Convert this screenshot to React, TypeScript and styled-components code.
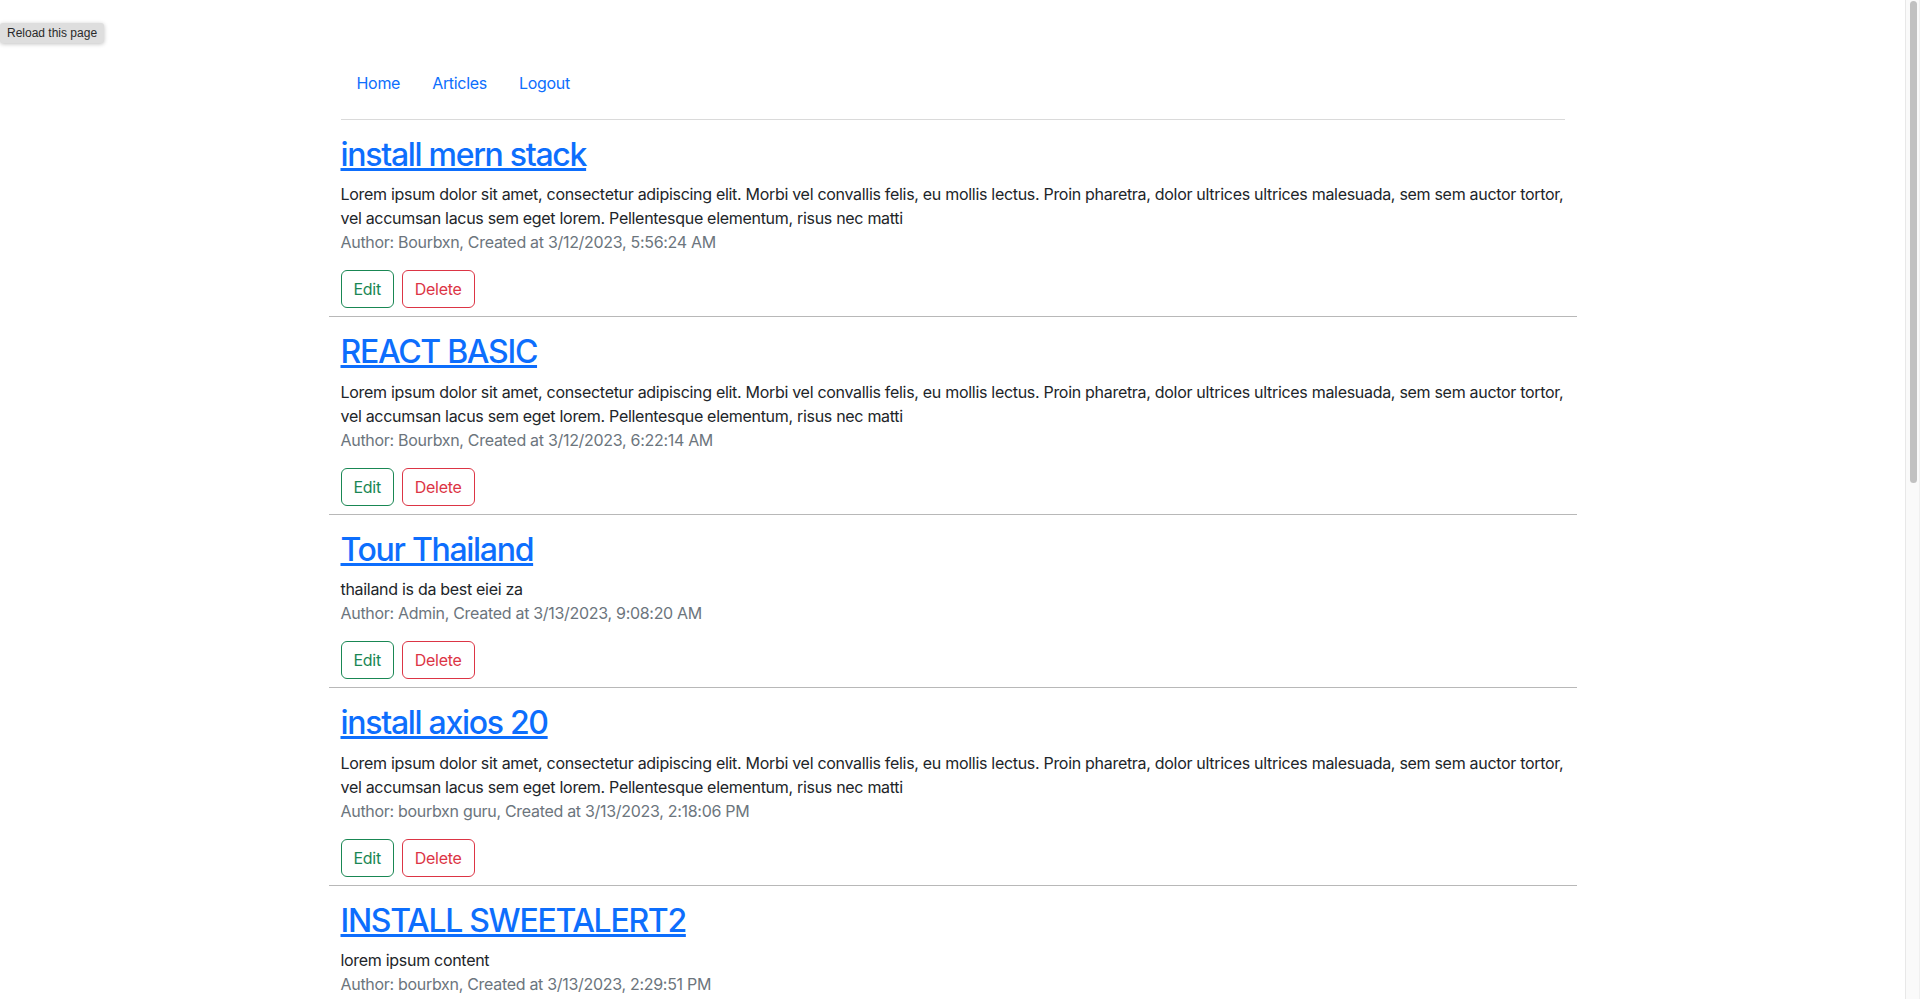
import React from "react"
import styled, { createGlobalStyle, css } from "styled-components"

type Article = {
  title: string
  content: string
  author: string
  createdAt: string
}

const lorem =
  "Lorem ipsum dolor sit amet, consectetur adipiscing elit. Morbi vel convallis felis, eu mollis lectus. Proin pharetra, dolor ultrices ultrices malesuada, sem sem auctor tortor, vel accumsan lacus sem eget lorem. Pellentesque elementum, risus nec matti"

const articles: Article[] = [
  { title: "install mern stack", content: lorem, author: "Bourbxn", createdAt: "3/12/2023, 5:56:24 AM" },
  { title: "REACT BASIC", content: lorem, author: "Bourbxn", createdAt: "3/12/2023, 6:22:14 AM" },
  { title: "Tour Thailand", content: "thailand is da best eiei za", author: "Admin", createdAt: "3/13/2023, 9:08:20 AM" },
  { title: "install axios 20", content: lorem, author: "bourbxn guru", createdAt: "3/13/2023, 2:18:06 PM" },
  { title: "INSTALL SWEETALERT2", content: "lorem ipsum content", author: "bourbxn", createdAt: "3/13/2023, 2:29:51 PM" },
  { title: "react router dom", content: lorem, author: "bourbxn", createdAt: "3/13/2023, 3:02:44 PM" },
  { title: "jwt authen", content: "json web token for login", author: "Admin", createdAt: "3/13/2023, 4:11:09 PM" },
  { title: "express api", content: lorem, author: "Bourbxn", createdAt: "3/14/2023, 8:45:31 AM" },
  { title: "mongodb atlas", content: "connect database with mongoose", author: "bourbxn guru", createdAt: "3/14/2023, 10:20:57 AM" },
  { title: "react quill", content: lorem, author: "bourbxn", createdAt: "3/14/2023, 1:37:12 PM" },
]

export default function App() {
  return (
    <>
      <GlobalStyle />
      <Shell>
        <Tooltip>Reload this page</Tooltip>
        <Main>
          <Page>
            <Header>
              <Nav>
                <NavLink href="#">Home</NavLink>
                <NavLink href="#">Articles</NavLink>
                <NavLink href="#">Logout</NavLink>
              </Nav>
              <Rule />
            </Header>
            {articles.map((a, i) => (
              <ArticleRow key={i}>
                <Title>
                  <a href="#">{a.title}</a>
                </Title>
                <Body>{a.content}</Body>
                <Meta>
                  Author: {a.author}, Created at {a.createdAt}
                </Meta>
                <Actions>
                  <OutlineButton $variant="success">Edit</OutlineButton>
                  <OutlineButton $variant="danger">Delete</OutlineButton>
                </Actions>
              </ArticleRow>
            ))}
          </Page>
        </Main>
        <ScrollTrack>
          <ScrollThumb style={{ height: 482 }} />
        </ScrollTrack>
      </Shell>
    </>
  )
}

const GlobalStyle = createGlobalStyle`
  html, body {
    height: 100%;
    overflow: hidden;
  }
  body {
    margin: 0;
    background: #fff;
    color: #212529;
    font-family: Inter, "Liberation Sans", sans-serif;
    font-size: 16px;
    line-height: 1.5;
    letter-spacing: -0.3px;
  }
`

const Shell = styled.div`
  position: relative;
  display: flex;
  height: 100vh;
`

const Main = styled.main`
  flex: 1;
  overflow-y: auto;
  scrollbar-width: none;
  &::-webkit-scrollbar {
    display: none;
  }
`

const ScrollTrack = styled.div`
  width: 15px;
  box-sizing: border-box;
  padding: 1px 3px 0 3px;
  background: #fafafa;
  border-left: 1px solid #e8e8e8;
  border-right: 1px solid #f0f0f0;
`

const ScrollThumb = styled.div`
  width: 7px;
  margin-left: 1px;
  background: #c1c1c1;
  border-radius: 4px;
`

const Tooltip = styled.div`
  position: absolute;
  top: 23px;
  left: 0;
  z-index: 10;
  height: 20px;
  padding: 0 7px;
  background: #dedede;
  border-radius: 3px;
  box-shadow: 0 1px 4px rgba(0, 0, 0, 0.25);
  color: #2a2a2a;
  font-family: "Liberation Sans", sans-serif;
  font-size: 12px;
  line-height: 20px;
  letter-spacing: 0;
`

const Page = styled.div`
  width: 1248px;
  margin: 0 auto;
  padding: 63px 0 40px;
`

const Header = styled.div`
  padding: 0 12px;
`

const Nav = styled.nav`
  display: flex;
`

const NavLink = styled.a`
  padding: 8px 16px;
  color: #0d6efd;
  text-decoration: none;
`

const Rule = styled.hr`
  margin: 16px 0 0;
  border: 0;
  border-top: 1px solid #dadada;
`

const ArticleRow = styled.div`
  padding: 16px 12px 8px;
  border-bottom: 1px solid #b8b8b8;
`

const Title = styled.h2`
  margin: 0 0 8px;
  font-size: 32px;
  font-weight: 500;
  line-height: 1.2;
  letter-spacing: -1.3px;
  & a {
    color: #0d6efd;
    text-decoration: underline;
    text-decoration-thickness: 3px;
  }
`

const Body = styled.div`
  margin: 0;
`

const Meta = styled.p`
  margin: 0 0 16px;
  color: #6c757d;
`

const Actions = styled.div`
  display: flex;
  gap: 8px;
`

const variants = {
  success: css`
    color: #198754;
    border-color: #198754;
  `,
  danger: css`
    color: #dc3545;
    border-color: #dc3545;
  `,
}

const OutlineButton = styled.button<{ $variant: "success" | "danger" }>`
  padding: 6px 12px;
  border: 1px solid;
  border-radius: 6px;
  background: transparent;
  font-family: inherit;
  font-size: 16px;
  line-height: 1.5;
  letter-spacing: inherit;
  cursor: pointer;
  ${(p) => variants[p.$variant]}
`
